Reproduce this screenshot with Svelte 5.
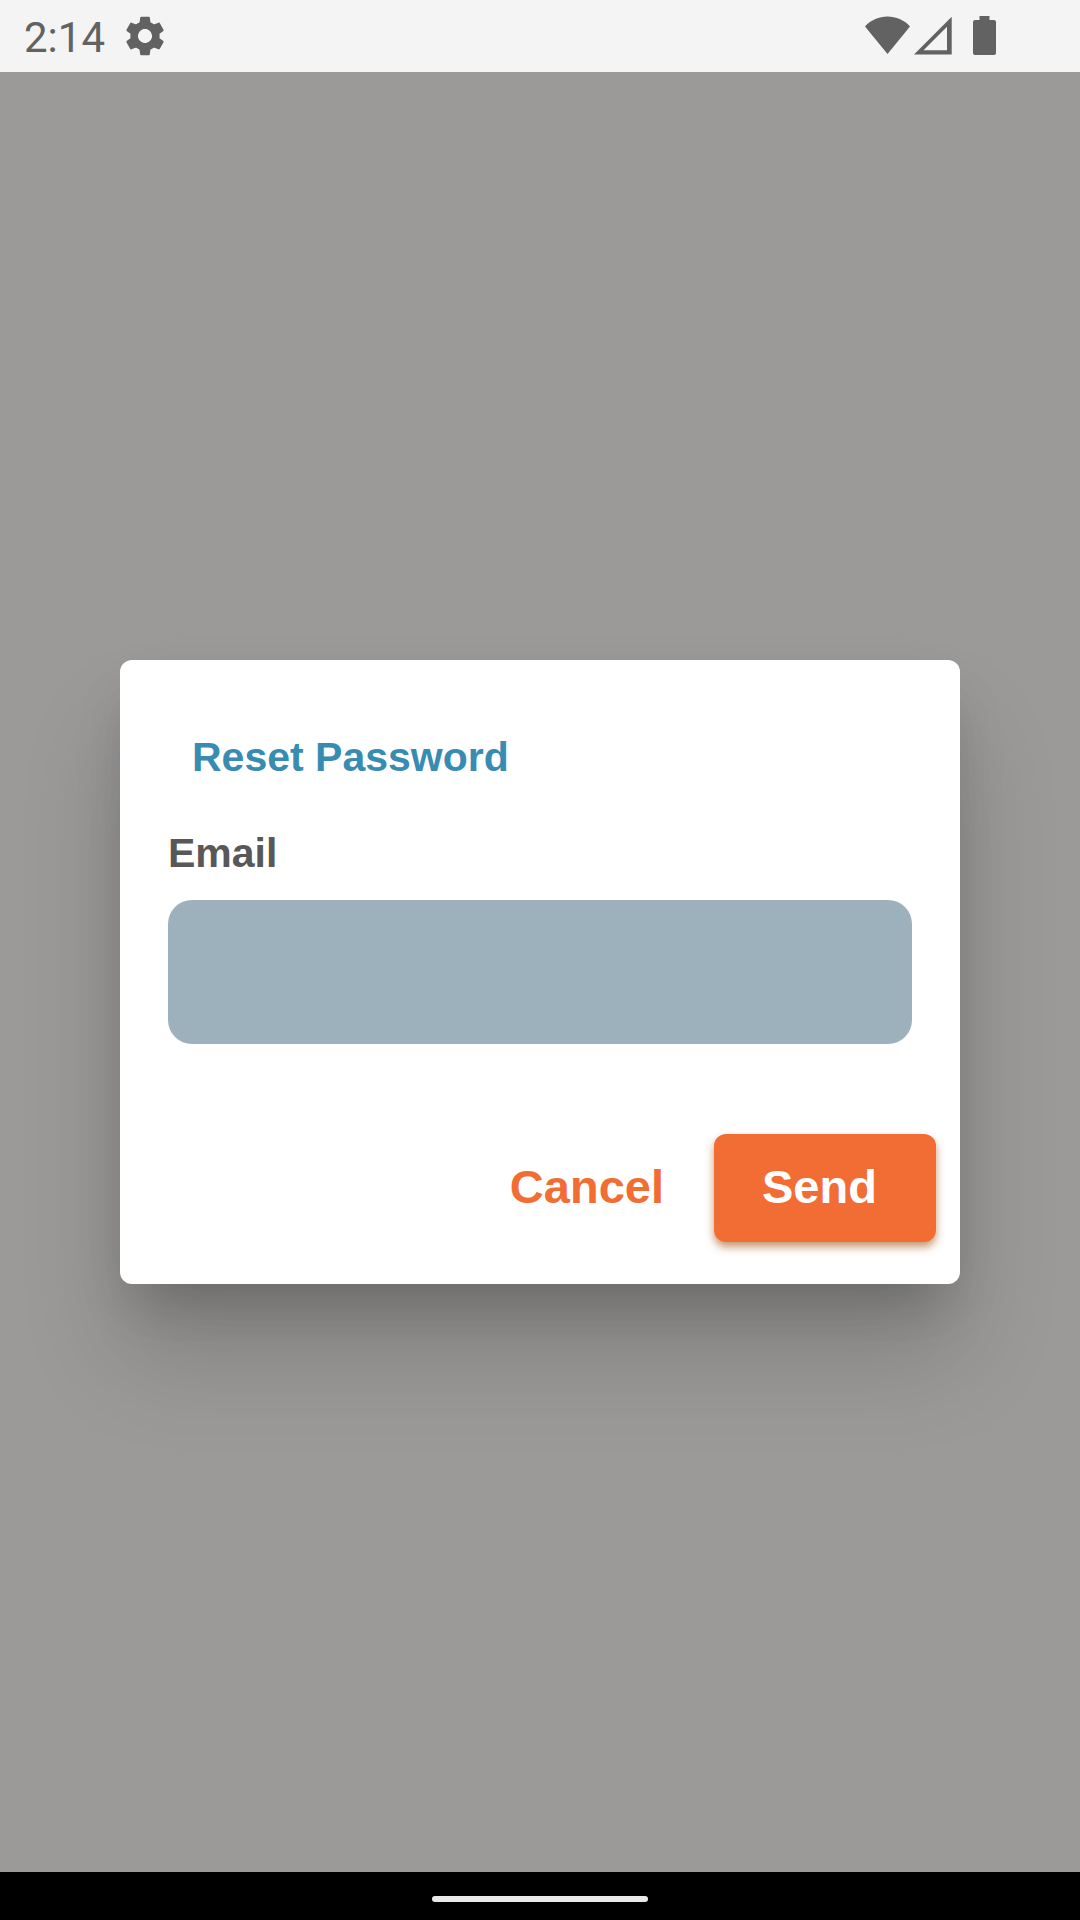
<script>
  let email = $state('');
  let open = $state(true);

  function submit(event) {
    event.preventDefault();
  }
</script>

<div class="screen">
  <header class="status">
    <span class="time">2:14</span>
    <svg class="gear" viewBox="0 0 24 24" aria-hidden="true">
      <path d="M19.14 12.94c.04-.3.06-.61.06-.94 0-.32-.02-.64-.07-.94l2.03-1.58c.18-.14.23-.41.12-.61l-1.92-3.32c-.12-.22-.37-.29-.59-.22l-2.39.96c-.5-.38-1.03-.7-1.62-.94l-.36-2.54c-.04-.24-.24-.41-.48-.41h-3.84c-.24 0-.43.17-.47.41l-.36 2.54c-.59.24-1.13.57-1.62.94l-2.39-.96c-.22-.08-.47 0-.59.22L2.74 8.87c-.12.21-.08.47.12.61l2.03 1.58c-.05.3-.09.63-.09.94s.02.64.07.94l-2.03 1.58c-.18.14-.23.41-.12.61l1.92 3.32c.12.22.37.29.59.22l2.39-.96c.5.38 1.03.7 1.62.94l.36 2.54c.05.24.24.41.48.41h3.84c.24 0 .44-.17.47-.41l.36-2.54c.59-.24 1.13-.56 1.62-.94l2.39.96c.22.08.47 0 .59-.22l1.92-3.32c.12-.22.07-.47-.12-.61l-2.01-1.58zM12 15.6c-1.98 0-3.6-1.62-3.6-3.6s1.62-3.6 3.6-3.6 3.6 1.62 3.6 3.6-1.62 3.6-3.6 3.6z" />
      <circle class="hub" cx="12" cy="12" r="5.4" />
    </svg>
    <svg class="system" viewBox="0 0 132 40" aria-hidden="true">
      <path d="M0 10.5C6 4 14 .6 22.5 .6S39 4 45 10.5L22.500 38z" />
      <path fill-rule="evenodd" d="M49 38.500L86.700 .8V38.500zM58.500 34.200H82V10.700z" />
      <path d="M114.500 0h10v4h4.500a2 2 0 0 1 2 2v31a2 2 0 0 1-2 2h-19a2 2 0 0 1-2-2V6a2 2 0 0 1 2-2h4.500z" />
    </svg>
  </header>

  <main class="backdrop">
    {#if open}
      <form class="dialog" role="dialog" aria-labelledby="dialog-title" onsubmit={submit}>
        <h1 id="dialog-title">Reset Password</h1>
        <div class="field">
          <label for="email">Email</label>
          <input id="email" type="email" bind:value={email} />
        </div>
        <div class="actions">
          <button type="button" class="cancel" onclick={() => (open = false)}>Cancel</button>
          <button type="submit" class="send">Send</button>
        </div>
      </form>
    {/if}
  </main>

  <footer class="nav"><span class="handle"></span></footer>
</div>

<style>
  :global(body) {
    margin: 0;
    background: #9b9a98;
  }

  .screen {
    display: flex;
    flex-direction: column;
    min-height: 100vh;
    font-family: "Liberation Sans", Arial, sans-serif;
  }

  .status {
    display: flex;
    align-items: center;
    box-sizing: border-box;
    height: 72px;
    padding: 0 83px 0 24px;
    background: #f4f4f4;
    color: #626262;
    fill: #626262;
  }

  .time {
    font-family: Roboto, sans-serif;
    font-size: 42px;
    line-height: 48px;
    padding-top: 4px;
  }

  .gear {
    width: 48px;
    height: 48px;
    margin-left: 16px;
  }

  .hub {
    fill: none;
    stroke: #626262;
    stroke-width: 3.6;
  }

  .system {
    width: 132px;
    height: 40px;
    margin-left: auto;
  }

  .backdrop {
    flex: 1;
    display: flex;
    align-items: center;
    padding: 0 120px;
    background: #9b9a98;
    overflow: hidden;
  }

  .dialog {
    flex: 1;
    min-width: 0;
    padding: 72px 24px 42px;
    box-sizing: border-box;
    border-radius: 12px;
    background: #fff;
    box-shadow:
      0 33px 45px -21px rgba(0, 0, 0, 0.15),
      0 72px 102px 0 rgba(0, 0, 0, 0.16),
      0 27px 60px 0 rgba(0, 0, 0, 0.05);
  }

  h1 {
    margin: 0;
    padding: 0 48px;
    font-size: 41px;
    line-height: 50px;
    font-weight: 700;
    color: #388cb2;
  }

  .field {
    display: flex;
    flex-direction: column;
    gap: 22px;
    padding: 46px 24px 90px;
  }

  label {
    font-size: 41px;
    line-height: 50px;
    font-weight: 700;
    color: #585858;
  }

  input {
    box-sizing: border-box;
    width: 100%;
    height: 144px;
    padding: 0 36px;
    border: 0;
    border-radius: 24px;
    outline: 0;
    background: #9db1bc;
    color: #333;
    font: 41px "Liberation Sans", Arial, sans-serif;
  }

  .actions {
    display: flex;
    justify-content: flex-end;
  }

  button {
    height: 108px;
    padding: 0 50px 4px 48px;
    border: 0;
    border-radius: 12px;
    background: none;
    font: 700 47px "Liberation Sans", Arial, sans-serif;
    text-align: left;
    cursor: pointer;
  }

  .cancel {
    color: #f26d33;
  }

  .send {
    min-width: 222px;
    background: #f26d33;
    color: #fff;
    box-shadow: 0 5px 8px rgba(170, 95, 35, 0.65);
  }

  .nav {
    display: flex;
    justify-content: center;
    align-items: center;
    height: 48px;
    padding-top: 6px;
    box-sizing: border-box;
    background: #000;
  }

  .handle {
    width: 20%;
    height: 6px;
    border-radius: 3px;
    background: #eaeaea;
  }
</style>
